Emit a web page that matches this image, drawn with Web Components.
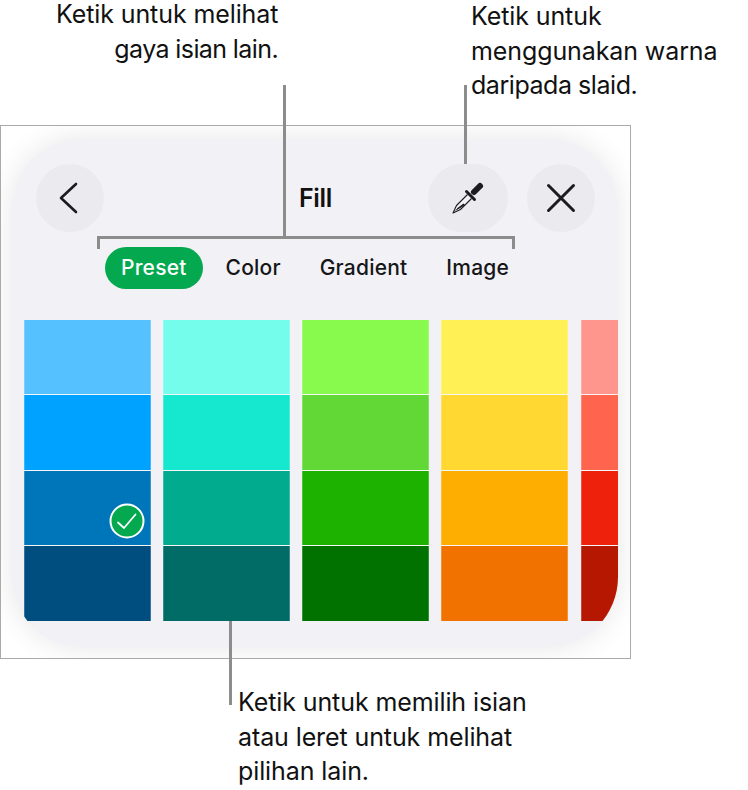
<!DOCTYPE html>
<html lang="id">
<head>
<meta charset="utf-8">
<title>Fill</title>
<style>
  html, body { margin: 0; background: #fff; }
  body { font-family: Inter, "Liberation Sans", sans-serif; color: #111; }
</style>
</head>
<body>
<help-figure>
  <callout-note slot="top" style="--left: 56px; --width: 222px; --top: -3px; --align: right">Ketik untuk melihat<br><span style="letter-spacing: -0.6px">gaya isian lain.</span></callout-note>
  <callout-note slot="top" style="--left: 193px; --width: 260px; --top: -1px">Ketik untuk<br>menggunakan warna<br><span style="letter-spacing: -0.45px">daripada slaid.</span></callout-note>
  <fill-panel></fill-panel>
  <callout-note slot="bottom" style="--left: 238px; --width: 320px; --top: 26px">Ketik untuk memilih isian<br>atau leret untuk melihat<br>pilihan lain.</callout-note>
</help-figure>

<script>
/**
 * Small helper, builds a template from a string.
 *
 * @param {string} html - The markup of the template.
 * @returns {HTMLTemplateElement} The template.
 */
function makeTemplate (html) {
  const template = document.createElement('template')
  template.innerHTML = html
  return template
}

const figureTemplate = makeTemplate(`
  <style>
    :host { display: block; position: relative; width: 748px; height: 790px; overflow: hidden; }
    .top { display: flex; height: 125px; }
    .line { position: absolute; background: #8c8c8c; }
    .frame {
      box-sizing: border-box;
      width: 631px;
      height: 534px;
      padding: 13px 12px 11px 11px;
      border: 1px solid #aaa;
      overflow: hidden;
      background: #fff;
    }
    .bottom { display: flex; }
  </style>
  <div class="top"><slot name="top"></slot></div>
  <div class="frame"><slot></slot></div>
  <div class="bottom"><slot name="bottom"></slot></div>
  <div class="line" style="left: 283px; top: 85px; width: 3px; height: 153px"></div>
  <div class="line" style="left: 97px; top: 236px; width: 418px; height: 3px"></div>
  <div class="line" style="left: 97px; top: 236px; width: 3px; height: 13px"></div>
  <div class="line" style="left: 512px; top: 236px; width: 3px; height: 13px"></div>
  <div class="line" style="left: 464px; top: 85px; width: 3px; height: 79px"></div>
  <div class="line" style="left: 229px; top: 621px; width: 3px; height: 84px"></div>
`)

/**
 * The whole picture: notes above and below a framed panel, with the leader lines over them.
 */
class HelpFigure extends HTMLElement {
  /**
   * Attaches the shadow root.
   */
  constructor () {
    super()
    this.attachShadow({ mode: 'open' }).appendChild(figureTemplate.content.cloneNode(true))
  }
}
customElements.define('help-figure', HelpFigure)

const noteTemplate = makeTemplate(`
  <style>
    :host {
      display: block;
      width: var(--width);
      margin-left: var(--left);
      margin-top: var(--top);
      font: 400 25px/34.5px Inter, "Liberation Sans", sans-serif;
      letter-spacing: -0.1px;
      text-align: var(--align, left);
      color: #111;
      white-space: nowrap;
    }
  </style>
  <slot></slot>
`)

/**
 * A text note of the figure.
 */
class CalloutNote extends HTMLElement {
  /**
   * Attaches the shadow root.
   */
  constructor () {
    super()
    this.attachShadow({ mode: 'open' }).appendChild(noteTemplate.content.cloneNode(true))
  }
}
customElements.define('callout-note', CalloutNote)

const buttonTemplate = makeTemplate(`
  <style>
    :host {
      display: flex;
      align-items: center;
      justify-content: center;
      width: var(--w, 68px);
      height: 68px;
      border-radius: 34px;
      background: #ebebef;
    }
    ::slotted(svg) { display: block; }
  </style>
  <slot></slot>
`)

/**
 * A round toolbar button, the icon comes through the slot.
 */
class RoundButton extends HTMLElement {
  /**
   * Attaches the shadow root.
   */
  constructor () {
    super()
    this.attachShadow({ mode: 'open' }).appendChild(buttonTemplate.content.cloneNode(true))
  }
}
customElements.define('round-button', RoundButton)

const tabTemplate = makeTemplate(`
  <style>
    :host {
      display: block;
      height: 42px;
      padding: 0 16px;
      border-radius: 21px;
      font: 500 21px/42px Inter, "Liberation Sans", sans-serif;
      letter-spacing: 0.2px;
      color: #161618;
    }
    :host([selected]) { background: #04a84e; color: #fff; }
  </style>
  <slot></slot>
`)

/**
 * One tab of the fill type row.
 */
class FillTab extends HTMLElement {
  /**
   * Attaches the shadow root.
   */
  constructor () {
    super()
    this.attachShadow({ mode: 'open' }).appendChild(tabTemplate.content.cloneNode(true))
  }
}
customElements.define('fill-tab', FillTab)

const columnTemplate = makeTemplate(`
  <style>
    :host {
      display: flex;
      flex: none;
      flex-direction: column;
      gap: 1px;
      width: 127px;
      height: 301px;
      background: #f6f6f8;
    }
    .cell {
      position: relative;
      flex: none;
      box-shadow: inset 1px 0 rgba(255, 255, 255, .22), inset -1px 0 rgba(255, 255, 255, .22);
    }
    .check {
      position: absolute;
      right: 6px;
      top: 32px;
      display: block;
    }
  </style>
`)

const CELL_HEIGHTS = [74, 75, 74, 75]

/**
 * A column of four colour swatches, colours come from the colors attribute.
 */
class SwatchColumn extends HTMLElement {
  /**
   * Attaches the shadow root and draws the cells.
   */
  constructor () {
    super()
    this.attachShadow({ mode: 'open' }).appendChild(columnTemplate.content.cloneNode(true))
  }

  /**
   * Fills the column when it reaches the page.
   */
  connectedCallback () {
    const selected = parseInt(this.getAttribute('selected'), 10)
    this.getAttribute('colors').split(' ').forEach((color, i) => {
      const cell = document.createElement('div')
      cell.className = 'cell'
      cell.style.background = color
      cell.style.height = `${CELL_HEIGHTS[i]}px`
      if (i === selected) {
        cell.innerHTML = `<svg class="check" width="36" height="36" viewBox="0 0 36 36">
          <circle cx="18" cy="18" r="16.5" fill="#04a84e" stroke="#fff" stroke-width="2"/>
          <path d="M9 19.5 L15 25 L26.5 11.5" fill="none" stroke="#fff" stroke-width="1.8" stroke-linecap="round" stroke-linejoin="round"/>
        </svg>`
      }
      this.shadowRoot.appendChild(cell)
    })
  }
}
customElements.define('swatch-column', SwatchColumn)

const panelTemplate = makeTemplate(`
  <style>
    :host {
      display: block;
      height: 508px;
      border-radius: 70px;
      background: #f1f1f6;
      box-shadow: 0 0 30px rgba(0, 0, 0, .1);
      overflow: hidden;
    }
    header {
      display: grid;
      grid-template-columns: 1fr auto 1fr;
      align-items: center;
      padding: 25px 23px 0 24px;
    }
    h1 {
      margin: 0;
      font: 600 25px/1 Inter, "Liberation Sans", sans-serif;
      letter-spacing: -0.3px;
      color: #111;
    }
    .right { display: flex; justify-content: flex-end; gap: 19px; }
    nav { display: flex; gap: 7px; margin: 15px 0 0 93px; }
    .swatches { display: flex; gap: 12px; margin: 31px 0 0 12px; }
    .swatches swatch-column:last-child { margin-left: 1px; }
  </style>
  <header>
    <div>
      <round-button>
        <svg width="68" height="68" viewBox="0 0 68 68"><path d="M40 20 L25 34 L40 48" fill="none" stroke="#1c1c1e" stroke-width="2.6" stroke-linecap="round" stroke-linejoin="round"/></svg>
      </round-button>
    </div>
    <h1>Fill</h1>
    <div class="right">
      <round-button style="--w: 80px">
        <svg width="36" height="36" viewBox="0 0 36 36">
          <path d="M17.5 14.5 L6.5 25.5 L3 33 L10.5 29.5 L21.5 18.5" fill="#f1f1f6" stroke="#1c1c1e" stroke-width="1.1" stroke-linejoin="round"/>
          <path d="M13.5 23.5 L7.5 28 L5 31 L9.5 28.5 L15 25 Z" fill="#1c1c1e"/>
          <path d="M16.5 11.5 L24.5 19.5" stroke="#1c1c1e" stroke-width="3" stroke-linecap="round"/>
          <path d="M24 12 L30 6" stroke="#1c1c1e" stroke-width="6" stroke-linecap="round"/>
        </svg>
      </round-button>
      <round-button>
        <svg width="68" height="68" viewBox="0 0 68 68"><path d="M21.5 21.5 L46.5 46.5 M46.5 21.5 L21.5 46.5" fill="none" stroke="#1c1c1e" stroke-width="3" stroke-linecap="round"/></svg>
      </round-button>
    </div>
  </header>
  <nav>
    <fill-tab selected>Preset</fill-tab>
    <fill-tab>Color</fill-tab>
    <fill-tab>Gradient</fill-tab>
    <fill-tab>Image</fill-tab>
  </nav>
  <div class="swatches">
    <swatch-column colors="#56c1ff #00a2ff #0076ba #004d80" selected="2"></swatch-column>
    <swatch-column colors="#73fdea #16e7cf #00ab8e #006c65"></swatch-column>
    <swatch-column colors="#88fa4e #61d836 #1db100 #017100"></swatch-column>
    <swatch-column colors="#fff056 #ffd932 #feae00 #f27200"></swatch-column>
    <swatch-column colors="#ff968d #ff644e #ee220c #b51700"></swatch-column>
  </div>
`)

/**
 * The Fill popover with its toolbar, tabs and swatches.
 */
class FillPanel extends HTMLElement {
  /**
   * Attaches the shadow root.
   */
  constructor () {
    super()
    this.attachShadow({ mode: 'open' }).appendChild(panelTemplate.content.cloneNode(true))
  }
}
customElements.define('fill-panel', FillPanel)
</script>
</body>
</html>
